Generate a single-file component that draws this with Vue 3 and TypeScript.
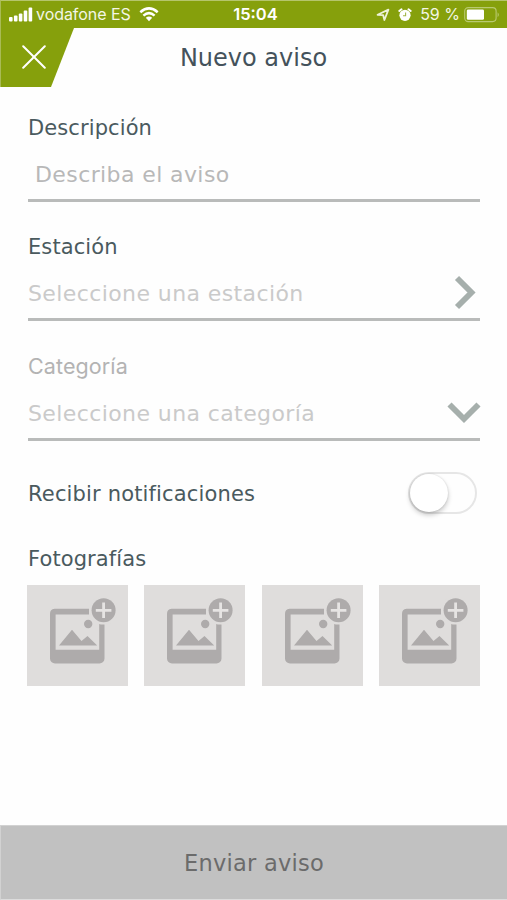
<script setup lang="ts">
import { ref } from 'vue'

interface Field {
  id: string
  label: string
  placeholder: string
  arrow?: string
}

const fields: Field[] = [
  { id: 'descripcion', label: 'Descripción', placeholder: 'Describa el aviso' },
  { id: 'estacion', label: 'Estación', placeholder: 'Seleccione una estación', arrow: 'M10 4 L24.5 18.5 L10 33' },
  { id: 'categoria', label: 'Categoría', placeholder: 'Seleccione una categoría', arrow: 'M2.5 10.5 L17 25 L31.5 10.5' },
]
const photoSlots = [1, 2, 3, 4]
const notify = ref(false)
</script>

<template>
  <div class="screen">
    <header class="status">
      <div class="carrier">
        <svg class="signal" viewBox="0 0 24 16" width="24" height="16">
          <rect x="0" y="10" width="3.6" height="4.4" rx="1" />
          <rect x="4.9" y="8.5" width="3.6" height="5.9" rx="1" />
          <rect x="9.8" y="6.5" width="3.6" height="7.9" rx="1" />
          <rect x="14.7" y="3.5" width="3.6" height="10.9" rx="1" />
          <rect x="19.6" y=".5" width="3.6" height="13.9" rx="1" />
        </svg>
        <span class="carrier-name">vodafone ES</span>
        <svg class="wifi" viewBox="0 0 20 15" width="20" height="15">
          <path d="M1.3 5.2 Q10 -2.5 18.7 5.2" />
          <path d="M4.4 8.6 Q10 3.7 15.6 8.6" />
          <path class="solid" d="M6.8 10.8 Q10 8.2 13.2 10.8 L10 14.2 Z" />
        </svg>
      </div>
      <span class="clock">15:04</span>
      <div class="indicators">
        <svg class="location" viewBox="0 0 14 14" width="14" height="14">
          <path d="M1.6 6.8 L12.4 1.6 L8.4 12 L7.2 7.2 Z" />
        </svg>
        <svg class="alarm" viewBox="0 0 14 14" width="14" height="14">
          <circle cx="7" cy="7.3" r="5.6" fill="#fff" />
          <path d="M1.3 3 L3.5 1.3 M12.7 3 L10.5 1.3" stroke="#fff" stroke-width="2" stroke-linecap="round" />
          <path d="M7.6 4.4 V7.8 H5" fill="none" stroke="#a3b64a" stroke-width="1.1" />
        </svg>
        <span class="percent">59 %</span>
        <svg class="battery" viewBox="0 0 36 16" width="36" height="16">
          <rect x=".7" y=".6" width="31.4" height="14" rx="3.5" fill="none" stroke="#b9c970" stroke-width="1.1" />
          <rect x="2.8" y="2.4" width="17.2" height="10.4" rx="1.4" fill="#fff" />
          <path d="M33.6 5.2 Q36 7.6 33.6 10.2 Z" fill="#b9c970" />
        </svg>
      </div>
    </header>

    <nav class="bar">
      <button class="close" type="button">
        <svg viewBox="0 0 24 24" width="24" height="24">
          <path d="M1.2 1.2 L22.8 22.8 M22.8 1.2 L1.2 22.8" />
        </svg>
      </button>
      <h1 class="title">Nuevo aviso</h1>
    </nav>

    <main class="form">
      <section v-for="field in fields" :key="field.id" class="field" :class="field.id">
        <span class="label">{{ field.label }}</span>
        <div class="control">
          <span class="placeholder">{{ field.placeholder }}</span>
          <svg v-if="field.arrow" class="arrow" viewBox="0 0 34 36" width="34" height="36">
            <path :d="field.arrow" />
          </svg>
        </div>
      </section>

      <div class="notify">
        <span class="notify-label">Recibir notificaciones</span>
        <div class="toggle" :class="{ on: notify }" @click="notify = !notify">
          <i class="knob"></i>
        </div>
      </div>

      <span class="photos-label">Fotografías</span>
      <div class="photos">
        <div v-for="slot in photoSlots" :key="slot" class="photo">
          <svg viewBox="0 0 101 101" width="101" height="101">
            <path fill-rule="evenodd" d="M27.5 23.7 H73 A5 5 0 0 1 77.5 28.7 V73.5 A5 5 0 0 1 72.5 78.5 H28 A5 5 0 0 1 23 73.5 V28.7 A5 5 0 0 1 27.5 23.7 Z M28.6 29.6 V64.8 H72.2 V29.6 Z" />
            <path d="M32 60.5 L45 44.7 L54.5 56 L60.5 51 L70.2 60.5 Z" />
            <rect class="gap" x="62" y="20" width="18" height="19" />
            <circle class="gap" cx="76.6" cy="25.3" r="14.3" />
            <circle cx="61.2" cy="39" r="4.2" />
            <circle cx="76.6" cy="25.3" r="12" />
            <path class="plus" d="M76.6 17.5 V33.1 M68.8 25.3 H84.4" />
          </svg>
        </div>
      </div>
    </main>

    <button class="submit" type="button">Enviar aviso</button>
  </div>
</template>

<style>
body {
  margin: 0;
  background: #fefefe;
}
</style>

<style scoped>
.screen {
  box-sizing: border-box;
  width: 507px;
  height: 900px;
  display: flex;
  flex-direction: column;
  overflow: hidden;
  background: #fefefe;
  color: #4a5a5e;
  font-family: Verdana, "DejaVu Sans", sans-serif;
}
.status {
  box-sizing: border-box;
  flex: none;
  height: 28px;
  padding: 0 7px 0 8px;
  display: grid;
  grid-template-columns: 1fr auto 1fr;
  align-items: center;
  border-top: 1px solid #b5c56c;
  border-left: 1px solid #a9bb55;
  background: #86a00c;
  color: #fff;
  font-family: Inter, "Liberation Sans", sans-serif;
  font-size: 16px;
  line-height: 27px;
}
.carrier,
.indicators {
  display: flex;
  align-items: center;
}
.indicators {
  justify-content: flex-end;
}
.signal {
  fill: #fff;
}
.carrier-name {
  margin-left: 3px;
  color: #f3f6e5;
  letter-spacing: -0.05px;
  white-space: nowrap;
}
.wifi {
  margin-left: 8px;
  fill: none;
  stroke: #fff;
  stroke-width: 2.5;
}
.wifi .solid {
  fill: #fff;
  stroke: none;
}
.clock {
  padding-left: 2px;
  font-size: 16.5px;
  font-weight: 600;
}
.location {
  fill: none;
  stroke: #edf2d8;
  stroke-width: 1.8;
  stroke-linejoin: round;
}
.alarm {
  margin-left: 8px;
}
.percent {
  margin: 0 4px 0 8px;
  color: #f3f6e5;
  white-space: nowrap;
}
.bar {
  flex: none;
  height: 59px;
  display: grid;
  grid-template-columns: 74px 1fr 74px;
}
.close {
  display: flex;
  align-items: center;
  padding: 0 0 1px 21px;
  border: 0;
  border-left: 1px solid #a9bb55;
  background: #86a00c;
  clip-path: polygon(0 0, 100% 0, 51px 100%, 0 100%);
}
.close svg {
  stroke: #fff;
  stroke-width: 2;
  stroke-linecap: round;
}
.title {
  margin: 0;
  padding-top: 1px;
  color: #44525b;
  font-size: 24px;
  font-weight: 400;
  line-height: 58px;
  text-align: center;
}
.form {
  flex: 1;
  padding: 26px 27px 0 28px;
}
.field {
  height: 88px;
  margin-bottom: 32px;
}
.field.descripcion {
  margin-bottom: 31px;
}
.field.categoria {
  margin-bottom: 33px;
}
.label,
.photos-label {
  display: block;
  font-size: 21px;
  letter-spacing: 0.1px;
  line-height: 30px;
}
.categoria .label {
  margin: -1px 0 11px;
  color: #b3b3b3;
  font-family: Inter, sans-serif;
  font-size: 21.5px;
}
.control {
  box-sizing: border-box;
  height: 49px;
  margin-top: 10px;
  display: flex;
  justify-content: space-between;
  border-bottom: 3px solid #b9bbba;
}
.placeholder {
  color: #cacaca;
  font-size: 22px;
  letter-spacing: 0.4px;
  line-height: 43px;
  white-space: nowrap;
}
.descripcion .placeholder {
  padding-left: 7px;
  color: #b8b8b8;
}
.arrow {
  margin: 2px -1px 0 0;
  fill: none;
  stroke: #a6afac;
  stroke-width: 5.8;
}
.notify {
  height: 42px;
  padding-right: 3px;
  display: flex;
  align-items: center;
  justify-content: space-between;
}
.notify-label {
  padding-top: 2px;
  font-size: 21px;
  letter-spacing: 0.16px;
  line-height: 42px;
}
.toggle {
  box-sizing: border-box;
  width: 69px;
  height: 42px;
  border: 2px solid #e6e6e6;
  border-radius: 21px;
  background: #fefefe;
}
.toggle.on {
  background: #86a00c;
}
.knob {
  display: block;
  width: 38px;
  height: 38px;
  border-radius: 50%;
  background: #fff;
  box-shadow: 0 3px 5px rgba(0, 0, 0, 0.22), 0 0 2px rgba(0, 0, 0, 0.14);
}
.on .knob {
  margin-left: 27px;
}
.photos-label {
  margin-top: 30px;
}
.photos {
  margin: 11px 0 0 -1px;
  display: flex;
  justify-content: space-between;
}
.photo {
  width: 101px;
  height: 101px;
  background: #dfdddc;
}
.photo svg {
  display: block;
  fill: #aeabab;
}
.photo .gap {
  fill: #dfdddc;
}
.photo .plus {
  stroke: #e6e4e3;
  stroke-width: 2.8;
}
.submit {
  box-sizing: border-box;
  flex: none;
  height: 75px;
  padding: 1px 0 0;
  border: 0;
  border-top: 1px solid #d2d2d2;
  border-bottom: 1px solid #dcdcdc;
  border-left: 1px solid #d2d2d2;
  background: #c1c1c1;
  color: #6b6b6b;
  font-family: inherit;
  font-size: 22.5px;
  letter-spacing: 0.25px;
}
</style>
